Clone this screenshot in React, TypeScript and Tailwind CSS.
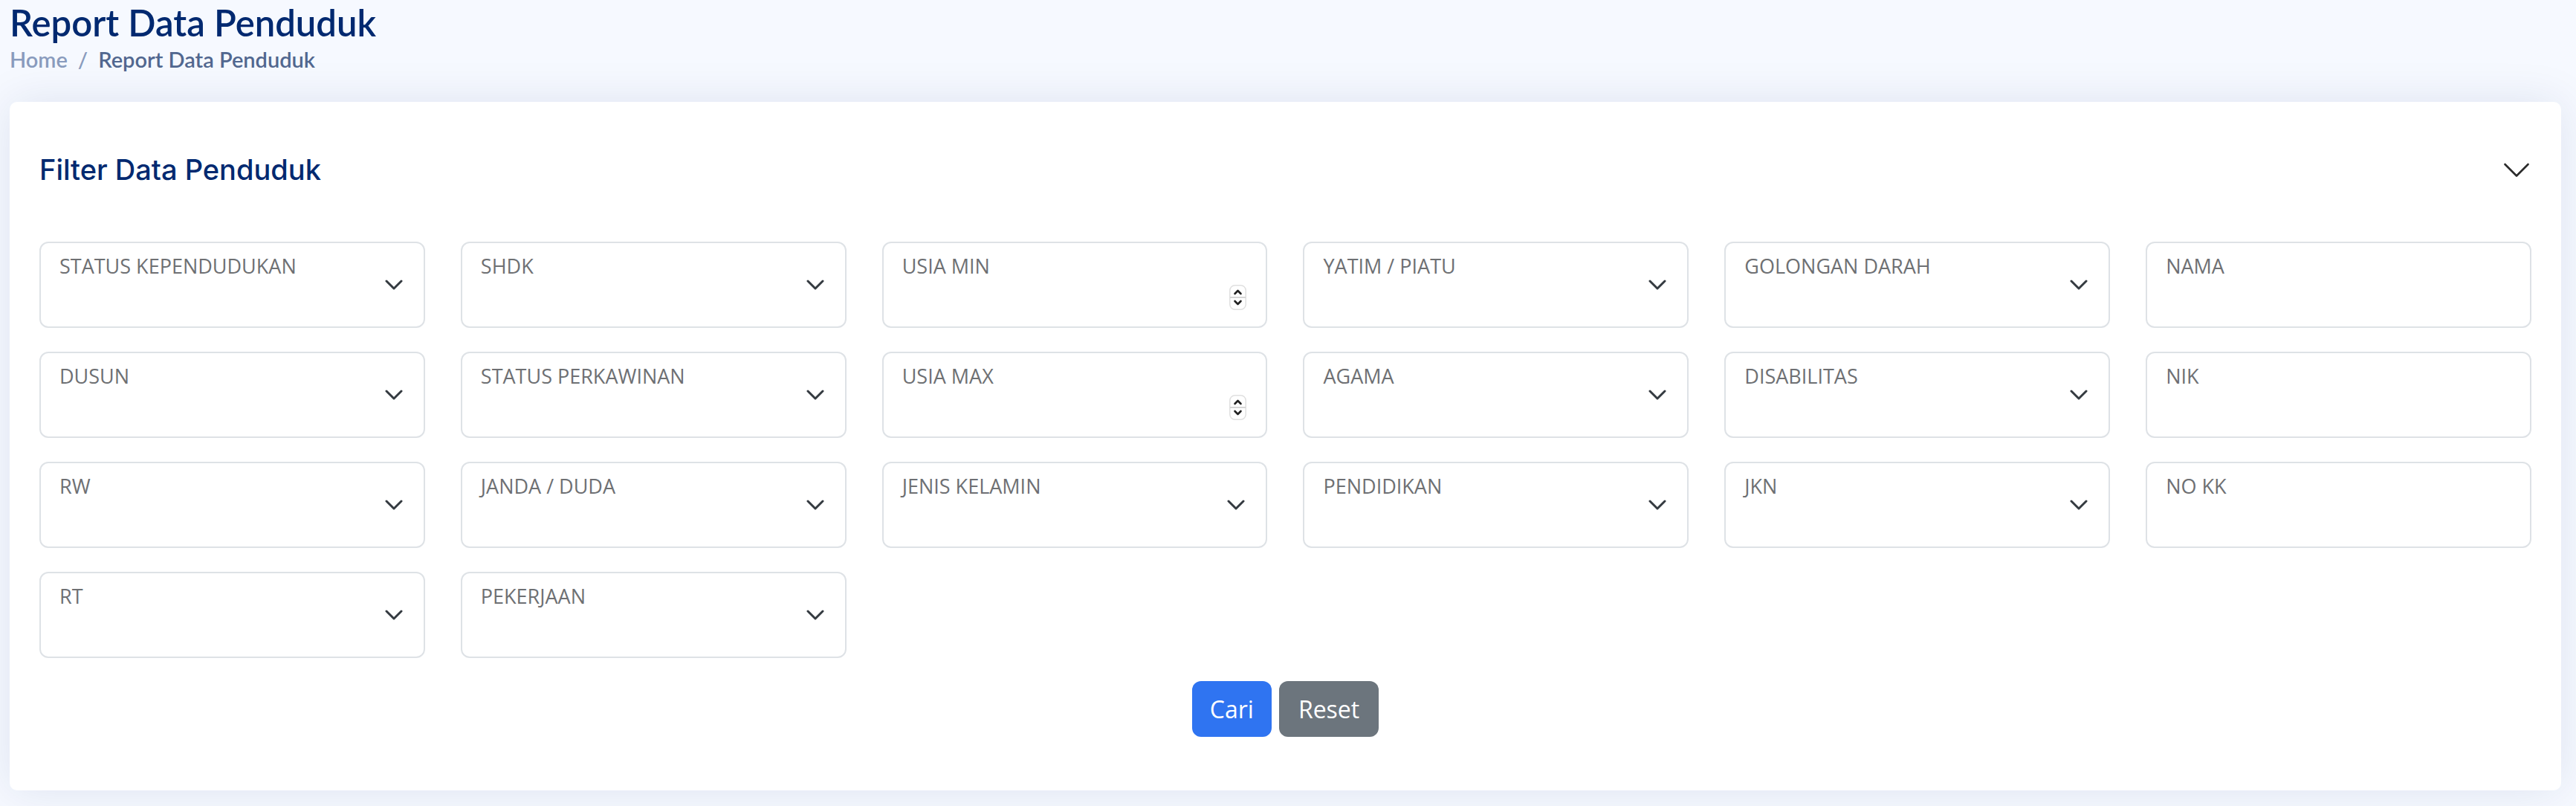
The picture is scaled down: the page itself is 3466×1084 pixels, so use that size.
import React from 'react';

type FieldType = 'select' | 'number' | 'text';

interface FieldDef {
  label: string;
  type: FieldType;
}

const fields: FieldDef[] = [
  { label: 'STATUS KEPENDUDUKAN', type: 'select' },
  { label: 'SHDK', type: 'select' },
  { label: 'USIA MIN', type: 'number' },
  { label: 'YATIM / PIATU', type: 'select' },
  { label: 'GOLONGAN DARAH', type: 'select' },
  { label: 'NAMA', type: 'text' },
  { label: 'DUSUN', type: 'select' },
  { label: 'STATUS PERKAWINAN', type: 'select' },
  { label: 'USIA MAX', type: 'number' },
  { label: 'AGAMA', type: 'select' },
  { label: 'DISABILITAS', type: 'select' },
  { label: 'NIK', type: 'text' },
  { label: 'RW', type: 'select' },
  { label: 'JANDA / DUDA', type: 'select' },
  { label: 'JENIS KELAMIN', type: 'select' },
  { label: 'PENDIDIKAN', type: 'select' },
  { label: 'JKN', type: 'select' },
  { label: 'NO KK', type: 'text' },
  { label: 'RT', type: 'select' },
  { label: 'PEKERJAAN', type: 'select' },
];

function SelectArrow() {
  return (
    <svg width="24" height="14" viewBox="0 0 24 14" fill="none">
      <path
        d="M2 2l10 10 10-10"
        stroke="#343a40"
        strokeWidth="3"
        strokeLinecap="round"
        strokeLinejoin="round"
      />
    </svg>
  );
}

function Spinner() {
  return (
    <svg width="23" height="34" viewBox="0 0 23 34" fill="none">
      <rect x="0.75" y="0.75" width="21.5" height="32.5" rx="7" fill="#fff" stroke="#e0e0e0" strokeWidth="1.5" />
      <line x1="1" y1="17" x2="22" y2="17" stroke="#d6d6d6" strokeWidth="2" />
      <path d="M7.5 12 11.5 8l4 4" stroke="#222" strokeWidth="2.6" strokeLinecap="round" strokeLinejoin="round" />
      <path d="M7.5 22l4 4 4-4" stroke="#222" strokeWidth="2.6" strokeLinecap="round" strokeLinejoin="round" />
    </svg>
  );
}

function Field({ label, type }: FieldDef) {
  return (
    <div className="relative h-[116px] rounded-[12px] border-2 border-[#dee2e6] bg-white">
      <span className="absolute left-[25px] top-[11px] text-[27px] leading-[40px] text-[#6e7073] font-['Open_Sans',sans-serif]">
        {label}
      </span>
      {type === 'select' && (
        <div className="flex h-full items-center justify-end pr-[28px]">
          <SelectArrow />
        </div>
      )}
      {type === 'number' && (
        <div className="flex h-full items-end justify-end pb-[22px] pr-[26px]">
          <Spinner />
        </div>
      )}
    </div>
  );
}

export default function App() {
  return (
    <div className="min-h-screen bg-[#f6f9ff] pl-[13px] pr-[20px] pb-[21px]">
      <div className="h-[137px]">
        <h1 className="text-[49px] font-semibold leading-[60px] text-[#012970] font-['Lato','Noto_Sans',sans-serif]">
          Report Data Penduduk
        </h1>
        <nav className="flex items-center text-[29px] font-semibold leading-[40px] font-['Lato','Noto_Sans',sans-serif]">
          <span className="text-[#899bbd]">Home</span>
          <span className="px-[14px] text-[#899bbd]">/</span>
          <span className="text-[#51678f]">Report Data Penduduk</span>
        </nav>
      </div>

      <div className="rounded-[10px] bg-white px-[40px] pt-[70px] pb-[72px] shadow-[0_0_60px_rgba(1,41,112,0.1)]">
        <div className="mb-[75px] flex h-[43px] items-center justify-between">
          <h5 className="text-[38px] font-medium text-[#012970] font-['Inter','Noto_Sans',sans-serif]">
            Filter Data Penduduk
          </h5>
          <svg width="34" height="20" viewBox="0 0 34 20" fill="none" className="mr-[3px]">
            <path d="M1.5 2 17 17.5 32.5 2" stroke="#2b2b2b" strokeWidth="2.6" strokeLinecap="round" strokeLinejoin="round" />
          </svg>
        </div>

        <div className="grid grid-cols-6 gap-x-[48px] gap-y-[32px]">
          {fields.map((f) => (
            <Field key={f.label} label={f.label} type={f.type} />
          ))}
        </div>

        <div className="mt-[31px] flex justify-center gap-[10px] font-['Open_Sans',sans-serif]">
          <button className="h-[75px] rounded-[12px] bg-[#2f74f1] px-[24px] text-[32px] text-white">
            Cari
          </button>
          <button className="h-[75px] rounded-[12px] bg-[#6c757d] px-[26px] text-[32px] text-white">
            Reset
          </button>
        </div>
      </div>
    </div>
  );
}
